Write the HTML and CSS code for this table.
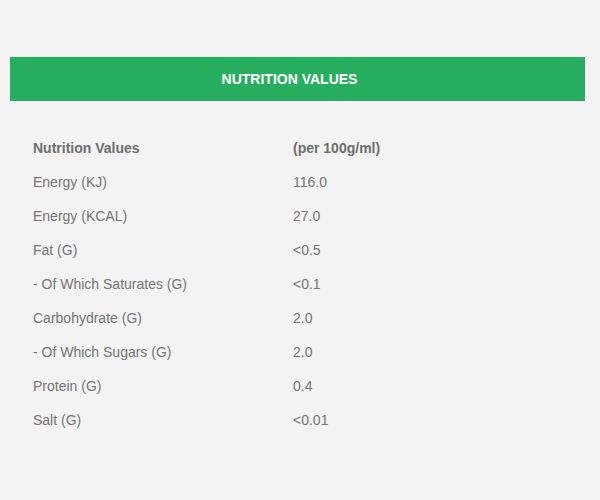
FILE: index.html
```html
<!DOCTYPE html>
<html>
<head>
<meta charset="utf-8">
<link rel="stylesheet" href="styles.css">
</head>
<body>
<div class="page">
  <div class="bar">NUTRITION VALUES</div>
  <div class="table">
    <div class="row head"><span class="label">Nutrition Values</span><span class="value">(per 100g/ml)</span></div>
    <div class="row"><span class="label">Energy (KJ)</span><span class="value">116.0</span></div>
    <div class="row"><span class="label">Energy (KCAL)</span><span class="value">27.0</span></div>
    <div class="row"><span class="label">Fat (G)</span><span class="value">&lt;0.5</span></div>
    <div class="row"><span class="label">- Of Which Saturates (G)</span><span class="value">&lt;0.1</span></div>
    <div class="row"><span class="label">Carbohydrate (G)</span><span class="value">2.0</span></div>
    <div class="row"><span class="label">- Of Which Sugars (G)</span><span class="value">2.0</span></div>
    <div class="row"><span class="label">Protein (G)</span><span class="value">0.4</span></div>
    <div class="row"><span class="label">Salt (G)</span><span class="value">&lt;0.01</span></div>
  </div>
</div>
</body>
</html>
```
FILE: styles.css
```css
html, body {
  margin: 0;
  padding: 0;
  background: #f3f3f3;
  height: 100%;
}
body {
  font-family: "Liberation Sans", Arial, sans-serif;
}
.page {
  padding-top: 57px;
}
.bar {
  margin-left: 10px;
  width: 575px;
  height: 44px;
  box-sizing: border-box;
  padding-right: 16px;
  background: #27ae5f;
  color: #ffffff;
  font-weight: bold;
  font-size: 14px;
  display: flex;
  align-items: center;
  justify-content: center;
}
.table {
  padding: 30px 0 0 33px;
}
.row {
  display: flex;
  height: 34px;
  align-items: center;
  font-size: 14px;
  color: #747474;
}
.row.head {
  font-weight: bold;
  color: #6e6e6e;
}
.label {
  width: 260px;
}
```
